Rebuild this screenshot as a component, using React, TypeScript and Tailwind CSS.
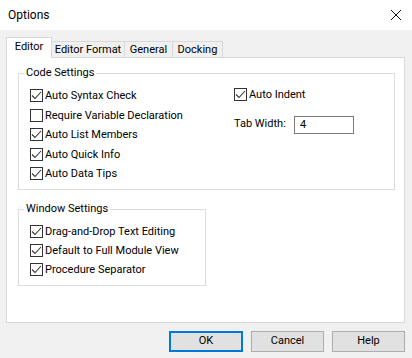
import React from "react"

const font = { fontFamily: 'Roboto, "Noto Sans", sans-serif' }

function Box({ checked }: { checked: boolean }) {
  return (
    <span className="flex h-[13px] w-[13px] shrink-0 items-center justify-center border border-[#333333] bg-white">
      {checked && (
        <svg width="11" height="11" viewBox="0 0 11 11">
          <polyline points="1,5.5 4,8.5 10,2" fill="none" stroke="#333333" strokeWidth="1.1" />
        </svg>
      )}
    </span>
  )
}

function Check({ label, checked = true, h = "h-[19.5px]" }: { label: string; checked?: boolean; h?: string }) {
  return (
    <label className={`flex ${h} items-center gap-[2px] whitespace-nowrap text-[11px] text-black`}>
      <Box checked={checked} />
      <span className="leading-none">{label}</span>
    </label>
  )
}

function Group({ title, className, children }: { title: string; className: string; children: React.ReactNode }) {
  return (
    <div className={`relative border border-[#dcdcdc] ${className}`}>
      <span className="absolute -top-[9px] left-[5px] whitespace-nowrap bg-white px-[2px] text-[11px] leading-[16px] text-black">{title}</span>
      {children}
    </div>
  )
}

export default function App() {
  const tabs = ["Editor Format", "General", "Docking"]
  const tabW = ["w-[73px]", "w-[48px]", "w-[50px]"]
  return (
    <div className="h-[358px] w-[412px] overflow-hidden bg-[#f0f0f0] text-black" style={font}>
      <div className="flex h-[30px] items-center justify-between bg-white pl-[8px] pr-[11px]">
        <span className="text-[12px]">Options</span>
        <svg width="10" height="10" viewBox="0 0 10 10">
          <path d="M0 0L10 10M10 0L0 10" stroke="#111" strokeWidth="1" />
        </svg>
      </div>

      <div className="pt-[7px]">
        <div className="flex h-[20px] items-end pl-[6px]">
          <div className="relative z-10 -mb-px flex h-[21px] w-[46px] items-start justify-center border-x border-t border-[#d9d9d9] bg-white pt-[3px] text-[11px] leading-none">
            Editor
          </div>
          {tabs.map((t, i) => (
            <div
              key={t}
              className={`flex h-[16px] ${tabW[i]} items-center justify-center whitespace-nowrap border-r border-t border-[#d9d9d9] bg-[#f0f0f0] text-[11px] leading-none`}
            >
              {t}
            </div>
          ))}
        </div>

        <div className="ml-[6px] h-[266px] w-[399px] border border-[#d9d9d9] bg-white">
          <Group title="Code Settings" className="ml-[11px] mt-[15px] h-[117px] w-[377px]">
            <div className="flex pl-[11px] pt-[12px]">
              <div className="w-[204px]">
                <Check label="Auto Syntax Check" />
                <Check label="Require Variable Declaration" checked={false} />
                <Check label="Auto List Members" />
                <Check label="Auto Quick Info" />
                <Check label="Auto Data Tips" />
              </div>
              <div className="-mt-[1px]">
                <Check label="Auto Indent" />
                <div className="mt-[11px] flex items-center text-[11px]">
                  <span className="w-[60px] whitespace-nowrap">Tab Width:</span>
                  <div className="flex h-[18px] w-[60px] items-center border border-[#7a7a7a] pl-[5px] text-[11px] leading-none">4</div>
                </div>
              </div>
            </div>
          </Group>

          <Group title="Window Settings" className="ml-[11px] mt-[19px] h-[77px] w-[188px]">
            <div className="pl-[11px] pt-[12px]">
              <Check label="Drag-and-Drop Text Editing" h="h-[19px]" />
              <Check label="Default to Full Module View" h="h-[19px]" />
              <Check label="Procedure Separator" h="h-[19px]" />
            </div>
          </Group>
        </div>

        <div className="mt-[8px] flex justify-end gap-[8px] pr-[7px]">
          <button className="flex h-[21px] w-[74px] items-center justify-center border-2 border-[#0078d7] bg-[#e1e1e1] text-[11px]">OK</button>
          <button className="flex h-[21px] w-[73px] items-center justify-center border border-[#adadad] bg-[#e1e1e1] text-[11px]">Cancel</button>
          <button className="flex h-[21px] w-[73px] items-center justify-center border border-[#adadad] bg-[#e1e1e1] text-[11px]">Help</button>
        </div>
      </div>
    </div>
  )
}
